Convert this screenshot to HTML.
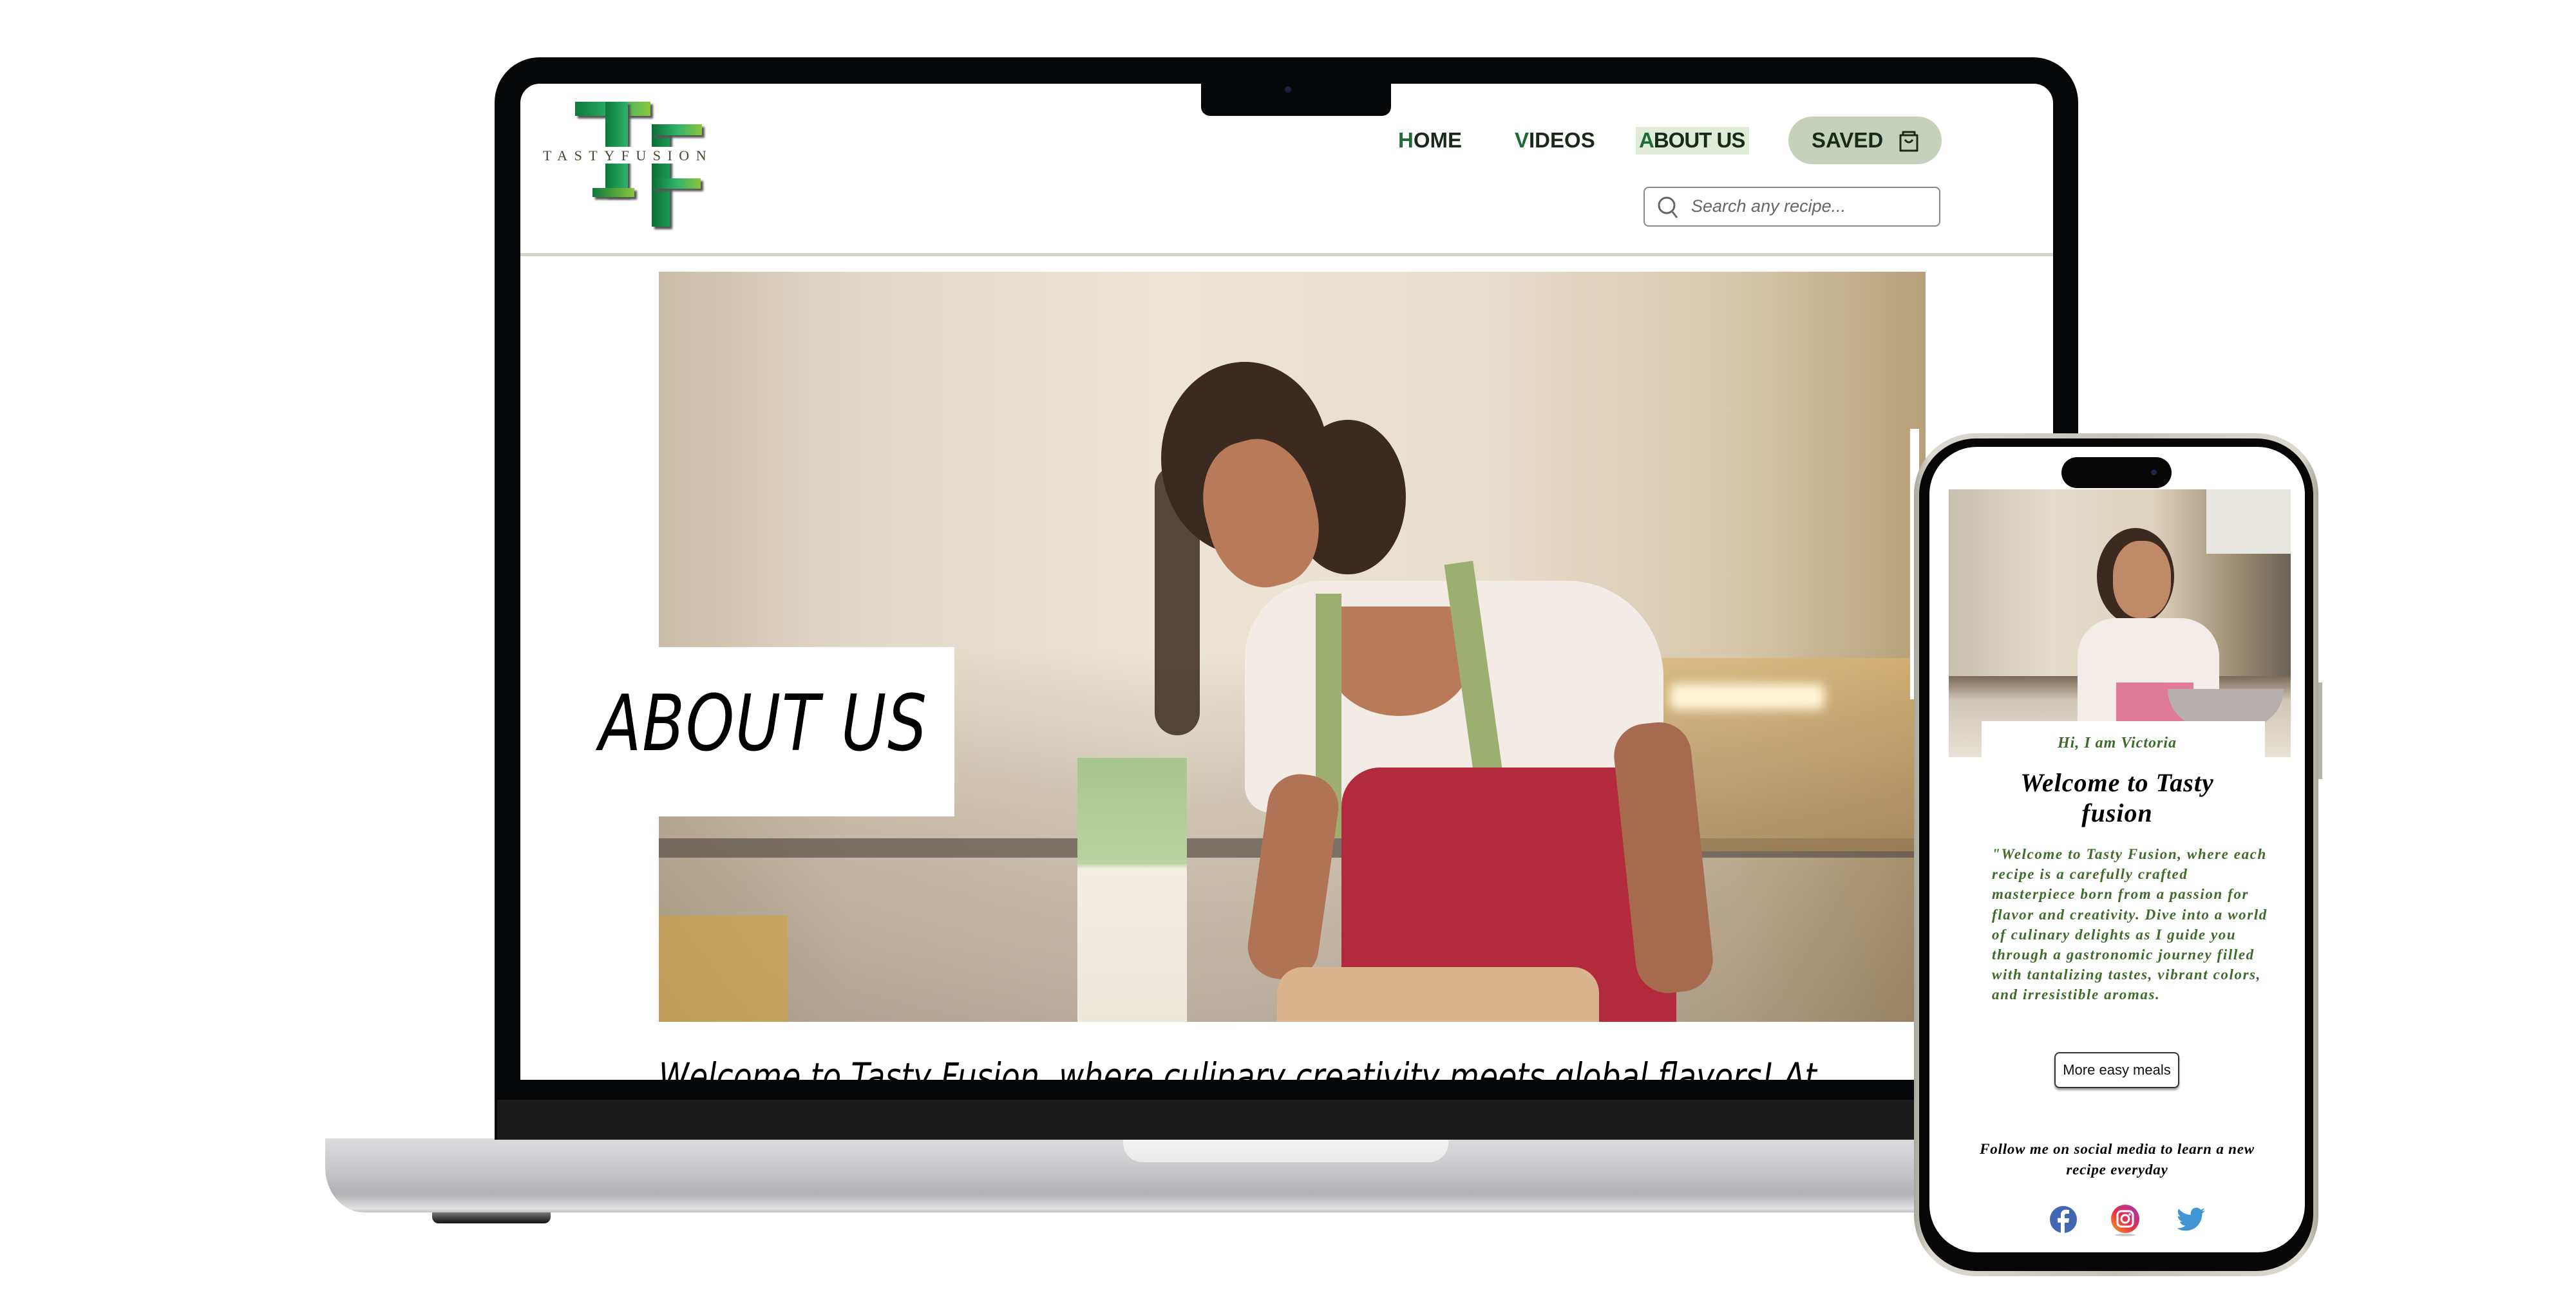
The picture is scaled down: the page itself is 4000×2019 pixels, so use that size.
<!DOCTYPE html>
<html><head><meta charset="utf-8">
<style>
*{margin:0;padding:0;box-sizing:border-box}
body{width:4000px;height:2019px;background:#fff;position:relative;overflow:hidden;font-family:"Liberation Sans",sans-serif}
.a{position:absolute}
.cur{font-family:"Liberation Serif","DejaVu Serif",serif;font-style:italic}
</style></head><body>

<div class="a" style="left:505px;top:1768px;width:2990px;height:115px;border-radius:0 0 60px 60px / 0 0 70px 70px;background:linear-gradient(#dcdcde,#c9c9cc 40%,#b2b2b6 75%,#e2e2e4 95%,#c0c0c2)"></div>
<div class="a" style="left:1744px;top:1768px;width:505px;height:37px;border-radius:0 0 30px 30px;background:linear-gradient(#f4f4f5,#eaeaec)"></div>
<div class="a" style="left:671px;top:1883px;width:184px;height:17px;border-radius:0 0 10px 10px;background:linear-gradient(#777,#111)"></div>

<div class="a" style="left:768px;top:89px;width:2459px;height:1681px;border-radius:70px 70px 0 0;background:#050708"></div>
<div class="a" style="left:772px;top:1708px;width:2451px;height:62px;background:#1a1a1a"></div>
<div class="a" style="left:808px;top:130px;width:2380px;height:1547px;background:#fff;border-radius:30px 30px 0 0;overflow:hidden">
  <div class="a" style="left:85px;top:28px;width:117px;height:22px;background:linear-gradient(90deg,#0c7a3a,#2fb36a,#8bc53f);box-shadow:4px 4px 3px #555"></div>
  <div class="a" style="left:132px;top:28px;width:35px;height:147px;background:linear-gradient(90deg,#0c7a3a,#2fb36a);box-shadow:4px 4px 3px #555"></div>
  <div class="a" style="left:112px;top:162px;width:65px;height:14px;background:linear-gradient(90deg,#0c7a3a,#8bc53f);box-shadow:4px 4px 3px #555"></div>
  <div class="a" style="left:204px;top:63px;width:28px;height:159px;background:linear-gradient(90deg,#0a6e35,#1e9a52);box-shadow:4px 4px 3px #555"></div>
  <div class="a" style="left:204px;top:63px;width:78px;height:17px;background:linear-gradient(90deg,#0a6e35,#2fb36a,#8bc53f);box-shadow:4px 4px 3px #555"></div>
  <div class="a" style="left:204px;top:147px;width:76px;height:16px;background:linear-gradient(90deg,#0a6e35,#2fb36a,#8bc53f);box-shadow:4px 4px 3px #555"></div>
  <div class="a" style="left:33px;top:98px;width:320px;height:26px;background:#fff"></div>
  <div class="a" style="left:35px;top:99px;font-family:'Liberation Serif',serif;font-size:22px;letter-spacing:10.5px;color:#4a4630">TASTYFUSION</div>

  <div class="a" style="left:1363px;top:69px;font-size:33px;font-weight:bold;color:#1a2a1a"><span style="color:#1d6b35">H</span>OME</div>
  <div class="a" style="left:1544px;top:69px;font-size:33px;font-weight:bold;color:#1a2a1a"><span style="color:#1d6b35">V</span>IDEOS</div>
  <div class="a" style="left:1732px;top:67px;width:176px;height:43px;background:#e0ecd8"></div>
  <div class="a" style="left:1737px;top:69px;font-size:33px;font-weight:bold;color:#1a2a1a;letter-spacing:-1px"><span style="color:#1d6b35">A</span>BOUT US</div>
  <div class="a" style="left:1969px;top:51px;width:238px;height:74px;border-radius:37px;background:#c5d1b9"></div>
  <div class="a" style="left:2005px;top:69px;font-size:33px;font-weight:bold;color:#1a2a1a">SAVED</div>
  <svg class="a" style="left:2139px;top:70px" width="34" height="38" viewBox="0 0 34 38"><path d="M4 10h26v24H4z M8 10V5h18v5 M11 17q6 8 12 0" fill="none" stroke="#1a2a1a" stroke-width="3" stroke-linejoin="round"/></svg>
  <div class="a" style="left:1744px;top:160px;width:461px;height:62px;border:2px solid #888;border-radius:8px"></div>
  <svg class="a" style="left:1764px;top:173px" width="36" height="40" viewBox="0 0 36 40"><circle cx="16" cy="16" r="12" fill="none" stroke="#666" stroke-width="3"/><path d="M25 26l7 9" stroke="#666" stroke-width="3"/></svg>
  <div class="a" style="left:1818px;top:175px;font-size:27px;font-style:italic;color:#666">Search any recipe...</div>
  <div class="a" style="left:0;top:263px;width:2380px;height:5px;background:#cfd8c8"></div>

  <div class="a" style="left:215px;top:292px;width:1967px;height:1165px;overflow:hidden;background:linear-gradient(90deg,#c9bda7 0%,#e2d8c8 15%,#ece4d6 40%,#e8dece 65%,#d8c8ac 85%,#b7a07a 100%)">
    <div class="a" style="left:0;top:0;width:1967px;height:1165px;background:linear-gradient(180deg,rgba(255,255,255,0) 50%,rgba(120,100,70,.25) 72%,rgba(90,70,50,.35) 100%)"></div>
    <div class="a" style="left:0;top:880px;width:1967px;height:30px;background:#5a5048;opacity:.7"></div>
    <div class="a" style="left:1500px;top:600px;width:467px;height:300px;background:linear-gradient(#d9b471,#a8875a);opacity:.7"></div>
    <div class="a" style="left:1570px;top:640px;width:240px;height:40px;background:#fff6d8;border-radius:10px;filter:blur(8px)"></div>
    <div class="a" style="left:0;top:1000px;width:200px;height:165px;background:#c9a24a;opacity:.7"></div>
    <div class="a" style="left:780px;top:140px;width:260px;height:300px;border-radius:50%;background:#3a2a20"></div>
    <div class="a" style="left:770px;top:300px;width:70px;height:420px;border-radius:40px;background:#3a2a20;opacity:.85"></div>
    <div class="a" style="left:980px;top:230px;width:180px;height:240px;border-radius:50%;background:#3a2a20"></div>
    <div class="a" style="left:850px;top:260px;width:170px;height:230px;border-radius:45%;background:#b87a58;transform:rotate(-15deg)"></div>
    <div class="a" style="left:910px;top:480px;width:650px;height:360px;border-radius:120px 150px 40px 40px;background:#f2ebe6"></div>
    <div class="a" style="left:1040px;top:520px;width:220px;height:170px;border-radius:0 0 50% 50%;background:#b87a58"></div>
    <div class="a" style="left:1020px;top:500px;width:40px;height:380px;background:#9cae70"></div>
    <div class="a" style="left:1250px;top:450px;width:45px;height:440px;background:#9cae70;transform:rotate(-8deg)"></div>
    <div class="a" style="left:1060px;top:770px;width:520px;height:400px;border-radius:60px 60px 0 0;background:#b32a3c"></div>
    <div class="a" style="left:930px;top:780px;width:110px;height:320px;border-radius:50px;background:#b07355;transform:rotate(8deg)"></div>
    <div class="a" style="left:1500px;top:700px;width:120px;height:420px;border-radius:50px;background:#a66a4e;transform:rotate(-6deg)"></div>
    <div class="a" style="left:960px;top:1080px;width:500px;height:85px;border-radius:40px 40px 0 0;background:#d9b48e"></div>
    <div class="a" style="left:650px;top:755px;width:170px;height:410px;background:linear-gradient(#a8c690 0%,#b9d3a0 40%,#f3ede4 42%,#eee7dc 100%)"></div>
  </div>
  <div class="a" style="left:110px;top:875px;width:564px;height:263px;background:#fff"></div>
  <div class="a" style="left:122px;top:925px;font-size:120px;color:#000;font-family:'DejaVu Sans',sans-serif;font-style:italic;letter-spacing:2px;transform:scaleX(.8);transform-origin:left">ABOUT US</div>

  <div class="a" style="left:215px;top:1508px;font-size:58px;font-style:italic;color:#000;font-family:'DejaVu Sans',sans-serif;white-space:nowrap;transform:scaleX(.82);transform-origin:left">Welcome to Tasty Fusion, where culinary creativity meets global flavors! At</div>
</div>
<div class="a" style="left:1865px;top:125px;width:295px;height:55px;border-radius:0 0 14px 14px;background:#050708"></div>
<div class="a" style="left:1995px;top:134px;width:10px;height:10px;border-radius:50%;background:#1a2240"></div>

<div class="a" style="left:2966px;top:666px;width:14px;height:420px;background:#fff"></div>
<div class="a" style="left:2972px;top:673px;width:628px;height:1309px;border-radius:95px;background:linear-gradient(90deg,#a9a79b,#dcdad0 4%,#c5c3b8 50%,#dcdad0 96%,#a9a79b)"></div>
<div class="a" style="left:3600px;top:1060px;width:6px;height:150px;background:#b5b3a8"></div>
<div class="a" style="left:2980px;top:681px;width:612px;height:1293px;border-radius:88px;background:#060606"></div>
<div class="a" style="left:2996px;top:694px;width:583px;height:1251px;border-radius:74px;background:#fff;overflow:hidden">
  <div class="a" style="left:30px;top:66px;width:531px;height:416px;overflow:hidden;background:linear-gradient(90deg,#c8c0ad,#e5ddcc 30%,#ddd3bd 60%,#9a8a70 85%,#6a6258)">
    <div class="a" style="left:0;top:290px;width:531px;height:126px;background:linear-gradient(#7a6a58,#cfc6b6 30%,#e8e2d6)"></div>
    <div class="a" style="left:400px;top:0;width:131px;height:100px;background:#e8e6e0"></div>
    <div class="a" style="left:230px;top:60px;width:120px;height:150px;border-radius:50%;background:#3a2a20"></div>
    <div class="a" style="left:255px;top:80px;width:90px;height:120px;border-radius:45%;background:#c08a68"></div>
    <div class="a" style="left:200px;top:200px;width:220px;height:216px;border-radius:60px 60px 0 0;background:#f2ede8"></div>
    <div class="a" style="left:260px;top:300px;width:120px;height:116px;background:#e07a9a"></div>
    <div class="a" style="left:340px;top:310px;width:180px;height:60px;border-radius:0 0 90px 90px;background:#b5b0ad"></div>
  </div>
  <div class="a" style="left:81px;top:426px;width:440px;height:70px;background:#fff"></div>
  <div class="a cur" style="left:0;width:583px;text-align:center;top:447px;font-size:24px;color:#3d6b2a;letter-spacing:1px;font-weight:bold">Hi, I am Victoria</div>
  <div class="a cur" style="left:0;width:583px;text-align:center;top:498px;font-size:40px;line-height:47px;color:#000;font-weight:bold;letter-spacing:1px">Welcome to Tasty<br>fusion</div>
  <div class="a cur" style="left:97px;top:617px;font-size:23px;line-height:31.2px;color:#3d6b2a;font-weight:bold;letter-spacing:1.6px;white-space:nowrap">"Welcome to Tasty Fusion, where each<br>recipe is a carefully crafted<br>masterpiece born from a passion for<br>flavor and creativity. Dive into a world<br>of culinary delights as I guide you<br>through a gastronomic journey filled<br>with tantalizing tastes, vibrant colors,<br>and irresistible aromas.</div>
  <div class="a" style="left:194px;top:940px;width:194px;height:56px;border:2px solid #333;border-radius:8px;box-shadow:0 3px 3px #999;font-size:22px;text-align:center;line-height:52px;color:#111">More easy meals</div>
  <div class="a cur" style="left:0;width:583px;text-align:center;top:1075px;font-size:23px;line-height:32px;color:#000;font-weight:bold;letter-spacing:.8px">Follow me on social media to learn a new<br>recipe everyday</div>
  <svg class="a" style="left:186px;top:1178px" width="44" height="44" viewBox="0 0 44 44"><circle cx="22" cy="22" r="21" fill="#4267b2"/><path d="M24 44V27h6l1-7h-7v-4c0-2 1-3 3-3h4V7c-1 0-3-.3-5-.3-5 0-8 3-8 8v5h-5v7h5v17z" fill="#fff"/></svg>
  <svg class="a" style="left:281px;top:1177px" width="46" height="50" viewBox="0 0 46 50"><defs><linearGradient id="ig" x1="0" y1="1" x2="1" y2="0"><stop offset="0" stop-color="#f7a31c"/><stop offset=".45" stop-color="#e8304a"/><stop offset="1" stop-color="#9b36b7"/></linearGradient></defs><ellipse cx="23" cy="47" rx="16" ry="2" fill="#ccc"/><circle cx="23" cy="22" r="22" fill="url(#ig)"/><rect x="11" y="10" width="24" height="24" rx="6" fill="none" stroke="#fff" stroke-width="3"/><circle cx="23" cy="22" r="6" fill="none" stroke="#fff" stroke-width="3"/><circle cx="30" cy="15" r="1.8" fill="#fff"/></svg>
  <svg class="a" style="left:384px;top:1180px" width="44" height="40" viewBox="0 0 24 20"><path d="M24 2.3c-.9.4-1.8.7-2.8.8 1-.6 1.8-1.6 2.2-2.7-1 .6-2 1-3.1 1.2A4.9 4.9 0 0 0 11.9 6 14 14 0 0 1 1.7.9a4.9 4.9 0 0 0 1.5 6.6c-.8 0-1.6-.3-2.2-.6 0 2.4 1.7 4.4 3.9 4.8-.7.2-1.5.2-2.2.1.6 2 2.4 3.4 4.6 3.4A9.9 9.9 0 0 1 0 17.3 14 14 0 0 0 7.5 19.5c9.1 0 14-7.5 14-14v-.6c1-.7 1.8-1.6 2.5-2.6z" fill="#3f96d2"/></svg>
</div>
<div class="a" style="left:3201px;top:710px;width:171px;height:48px;border-radius:24px;background:#060606"></div>
<div class="a" style="left:3340px;top:729px;width:9px;height:9px;border-radius:50%;background:#1a2450"></div>

</body></html>
